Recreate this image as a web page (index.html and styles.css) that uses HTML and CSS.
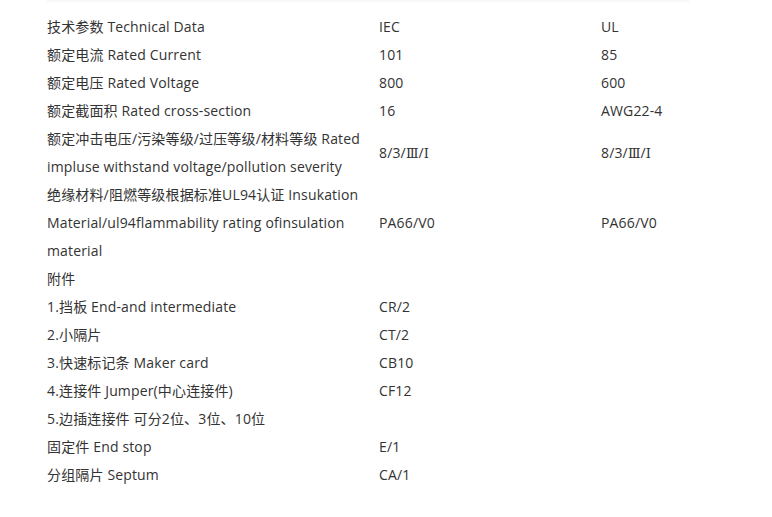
FILE: index.html
```html
<!DOCTYPE html>
<html lang="zh-CN">
<head>
<meta charset="utf-8">
<title>技术参数</title>
<link rel="stylesheet" href="styles.css">
</head>
<body>
<div class="page">
  <div class="strip"></div>
  <table class="spec">
    <colgroup><col class="c1"><col class="c2"><col class="c3"></colgroup>
    <tbody>
      <tr><td>技术参数 Technical Data</td><td>IEC</td><td>UL</td></tr>
      <tr><td>额定电流 Rated Current</td><td>101</td><td>85</td></tr>
      <tr><td>额定电压 Rated Voltage</td><td>800</td><td>600</td></tr>
      <tr><td>额定截面积 Rated cross-section</td><td>16</td><td>AWG22-4</td></tr>
      <tr><td>额定冲击电压/污染等级/过压等级/材料等级 Rated impluse withstand voltage/pollution severity</td><td>8/3/<span class="roman">Ⅲ</span>/<span class="roman">Ⅰ</span></td><td>8/3/<span class="roman">Ⅲ</span>/<span class="roman">Ⅰ</span></td></tr>
      <tr><td>绝缘材料/阻燃等级根据标准UL94认证 Insukation Material/ul94flammability rating ofinsulation material</td><td>PA66/V0</td><td>PA66/V0</td></tr>
      <tr><td>附件</td><td></td><td></td></tr>
      <tr><td>1.挡板 End-and intermediate</td><td>CR/2</td><td></td></tr>
      <tr><td>2.小隔片</td><td>CT/2</td><td></td></tr>
      <tr><td>3.快速标记条 Maker card</td><td>CB10</td><td></td></tr>
      <tr><td>4.连接件 Jumper(中心连接件)</td><td>CF12</td><td></td></tr>
      <tr><td>5.边插连接件 可分2位、3位、10位</td><td></td><td></td></tr>
      <tr><td>固定件 End stop</td><td>E/1</td><td></td></tr>
      <tr><td>分组隔片 Septum</td><td>CA/1</td><td></td></tr>
    </tbody>
  </table>
</div>
</body>
</html>
```

FILE: styles.css
```css
html, body {
  margin: 0;
  padding: 0;
  background: #ffffff;
}
.page {
  padding-left: 47px;
  width: 642px;
}
.strip {
  height: 2px;
  background: #f7f7f7;
}
.spec {
  margin-top: 11px;
  border-collapse: collapse;
  table-layout: fixed;
  width: 642px;
  font-family: "Open Sans", "Noto Sans CJK SC", sans-serif;
  font-size: 14px;
  letter-spacing: 0.15px;
  line-height: 28px;
  color: #333333;
}
.c1 { width: 332px; }
.c2 { width: 222px; }
.c3 { width: 88px; }
.spec td {
  padding: 0;
  vertical-align: middle;
  white-space: normal;
}
.spec td:first-child {
  padding-right: 16px;
}
.spec td:nth-child(3) {
  white-space: nowrap;
}
.roman {
  font-family: "DejaVu Serif", "Liberation Serif", serif;
  font-size: 13px;
  letter-spacing: 0;
}
```
